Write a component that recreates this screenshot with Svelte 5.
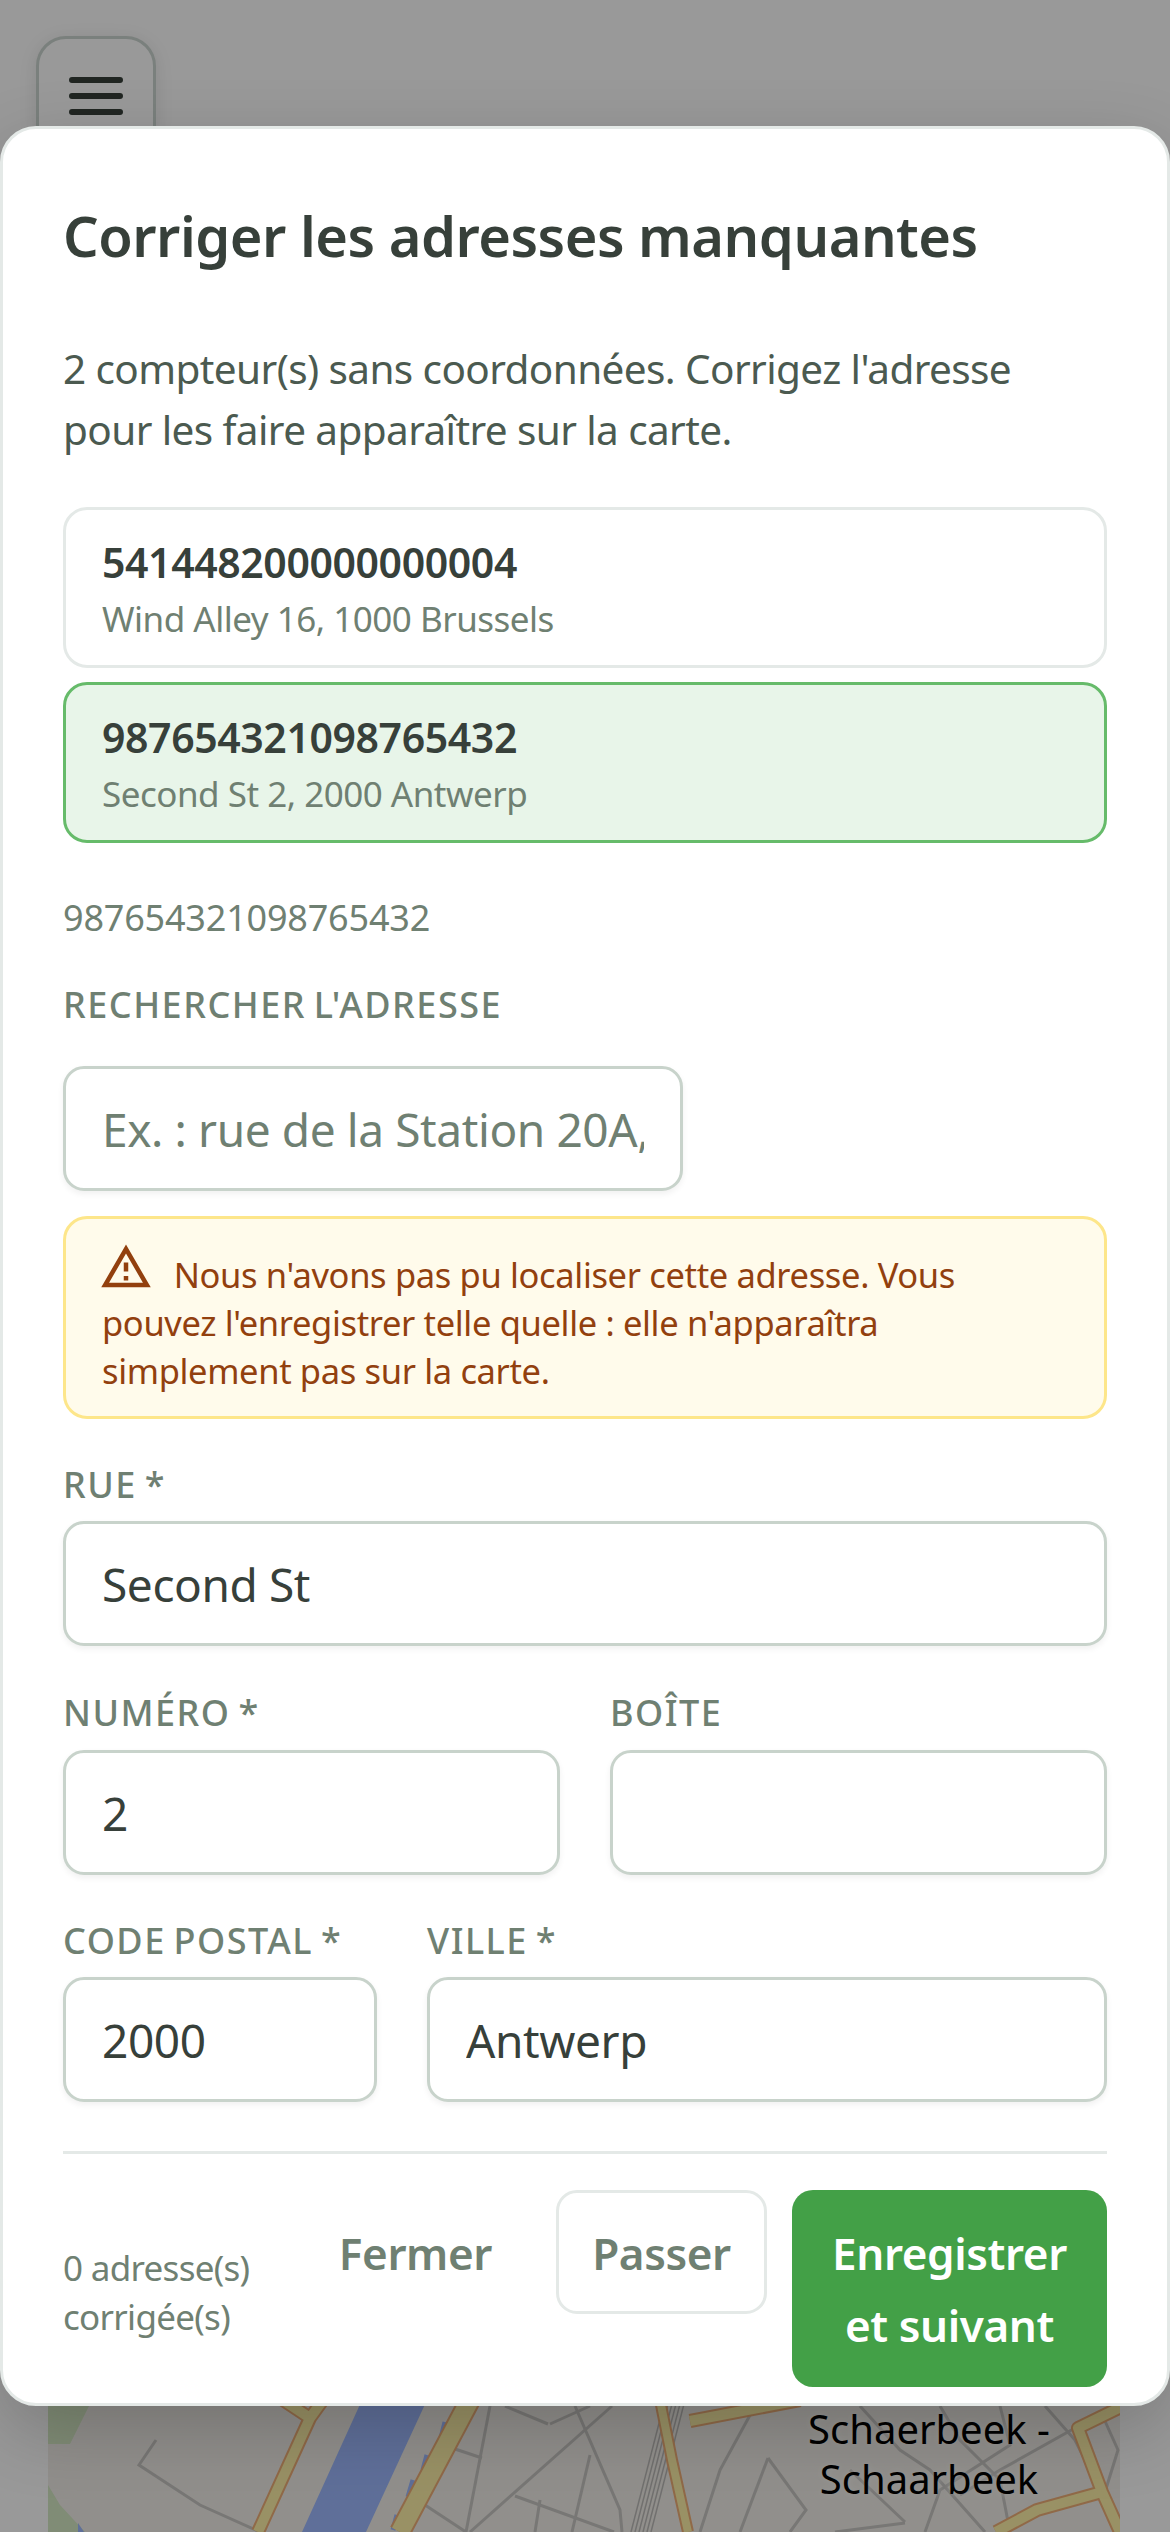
<script>
  const minor = [
    "M156 2440 L139 2465 L200 2505 L260 2532",
    "M505 2406 L548 2424",
    "M490 2406 L466 2532",
    "M455 2449 L482 2458",
    "M612 2406 L470 2532",
    "M575 2406 L620 2510 L622 2532",
    "M590 2455 L572 2532",
    "M515 2496 L614 2532",
    "M425 2505 L466 2532",
    "M540 2500 L535 2532",
    "M755 2406 L720 2470 L700 2532",
    "M860 2406 L900 2450 L930 2470 L985 2532",
    "M768 2458 L806 2510 L790 2532",
    "M768 2458 L740 2532",
    "M835 2532 L905 2523",
    "M905 2522 L850 2470",
    "M1000 2406 L1010 2445 L940 2490 L925 2532",
    "M1075 2428 L1000 2470 L960 2495",
    "M1045 2406 L1075 2440 L1100 2490",
    "M590 2406 L550 2424",
    "M940 2406 L960 2440 L1000 2480 L1010 2532",
    "M1100 2410 L1118 2450 L1105 2492"
  ];
  const rail = [0, 4, 8, 12, 16, 20];
  const roads = [
    { d: "M323 2400 L310 2418 L258 2532 M283 2400 L310 2418", w: 10 },
    { d: "M470 2400 L400 2532", w: 18 },
    { d: "M660 2400 L672 2460 L688 2532", w: 8 },
    { d: "M690 2421 L800 2400", w: 10 },
    { d: "M1125 2405 L1078 2428 L1102 2492 L1120 2532", w: 10 },
    { d: "M1102 2492 L1037 2510 L996 2532", w: 10 }
  ];
  const slivers = [
    "M445 2422 L440 2442",
    "M427 2455 L423 2470",
    "M413 2480 L408 2497",
    "M397 2515 L393 2530"
  ];
</script>

<div class="page">
  <svg class="map" viewBox="48 2400 1072 132" width="1072" height="132" aria-hidden="true">
    <rect x="48" y="2400" width="1072" height="132" class="land" />
    <path class="park" d="M48 2400 H92 L70 2444 H48 Z" />
    <path class="park" d="M48 2485 L60 2505 L85 2532 H48 Z" />
    <path class="water" d="M362 2400 H427 L366 2532 H302 Z" />
    <path class="water" d="M78 2523 L84 2532 H78 Z" />
    {#each slivers as d}
      <path class="sliver" d={d} />
    {/each}
    {#each minor as d}
      <path class="minor" d={d} />
    {/each}
    {#each rail as o}
      <path class="rail" d={`M${665 + o} 2400 L${631 + o} 2532`} />
    {/each}
    {#each roads as r}
      <path class="casing" d={r.d} style={`stroke-width:${r.w + 4}px`} />
    {/each}
    {#each roads as r}
      <path class="road" d={r.d} style={`stroke-width:${r.w}px`} />
    {/each}
  </svg>
  <div class="place">Schaerbeek -<br />Schaarbeek</div>

  <button class="menu" aria-label="Menu">
    <svg viewBox="0 0 54 38" width="54" height="38" aria-hidden="true">
      <path d="M3 3 H51 M3 19 H51 M3 35 H51" />
    </svg>
  </button>

  <div class="backdrop"></div>

  <section class="sheet">
    <h1>Corriger les adresses manquantes</h1>
    <p class="intro">2 compteur(s) sans coordonnées. Corrigez l'adresse pour les faire apparaître sur la carte.</p>

    <div class="cards">
      <div class="card">
        <div class="ean">541448200000000004</div>
        <div class="addr">Wind Alley 16, 1000 Brussels</div>
      </div>
      <div class="card active">
        <div class="ean">987654321098765432</div>
        <div class="addr">Second St 2, 2000 Antwerp</div>
      </div>
    </div>

    <div class="current">987654321098765432</div>

    <label class="lbl search-lbl" for="q">RECHERCHER L'ADRESSE</label>
    <input id="q" class="search" placeholder="Ex. : rue de la Station 20A, Bruxelles" />

    <div class="warn">
      <svg viewBox="0 0 24 24" width="54" height="54" aria-hidden="true"><path d="M12 2 L1 21 H23 M12 6 L19.53 19 H4.47 M11 10 V14 H13 V10 M11 16 V18 H13 V16" /></svg>
      <span>Nous n'avons pas pu localiser cette adresse. Vous pouvez l'enregistrer telle quelle : elle n'apparaîtra simplement pas sur la carte.</span>
    </div>

    <div class="field rue">
      <label class="lbl" for="rue">RUE *</label>
      <input id="rue" value="Second St" />
    </div>

    <div class="row two">
      <div class="field">
        <label class="lbl" for="num">NUMÉRO *</label>
        <input id="num" value="2" />
      </div>
      <div class="field">
        <label class="lbl" for="box">BOÎTE</label>
        <input id="box" />
      </div>
    </div>

    <div class="row cp">
      <div class="field">
        <label class="lbl" for="zip">CODE POSTAL *</label>
        <input id="zip" value="2000" />
      </div>
      <div class="field">
        <label class="lbl" for="city">VILLE *</label>
        <input id="city" value="Antwerp" />
      </div>
    </div>

    <footer>
      <div class="count">0 adresse(s) corrigée(s)</div>
      <div class="actions">
        <button class="btn ghost">Fermer</button>
        <button class="btn outline">Passer</button>
        <button class="btn primary">Enregistrer et suivant</button>
      </div>
    </footer>
  </section>
</div>

<style>
  :global(body) {
    margin: 0;
    background: #fff;
  }
  .page {
    position: relative;
    width: 1170px;
    height: 2532px;
    overflow: hidden;
    background: #fff;
    font-family: "Noto Sans", "Open Sans", sans-serif;
  }
  .map {
    position: absolute;
    left: 48px;
    top: 2400px;
    display: block;
  }
  .land { fill: #f2efe9; }
  .park { fill: #d5e9c5; }
  .water { fill: #9eb9ff; }
  .sliver { fill: none; stroke: #9eb9ff; stroke-width: 5; }
  .minor { fill: none; stroke: #c8c6c4; stroke-width: 3; }
  .rail { fill: none; stroke: #bdbbb9; stroke-width: 1.5; }
  .casing { fill: none; stroke: #f0b078; stroke-linejoin: round; }
  .road { fill: none; stroke: #fff2a8; stroke-linejoin: round; }
  .place {
    position: absolute;
    left: 768px;
    top: 2404px;
    width: 322px;
    text-align: center;
    font-size: 40px;
    line-height: 50px;
    color: #000;
    text-shadow: 0 0 6px #fff;
  }
  .menu {
    position: absolute;
    left: 36px;
    top: 36px;
    width: 120px;
    height: 120px;
    border: 3px solid #ccd5d0;
    border-radius: 30px;
    background: #fff;
    box-shadow: 0 3px 18px rgba(0, 0, 0, 0.1);
    padding: 0;
    display: flex;
    align-items: center;
    justify-content: center;
  }
  .menu path {
    fill: none;
    stroke: #37403a;
    stroke-width: 6;
    stroke-linecap: round;
  }
  .backdrop {
    position: absolute;
    inset: 0;
    background: rgba(0, 0, 0, 0.4);
  }
  .sheet {
    position: absolute;
    left: 0;
    right: 0;
    top: 126px;
    height: 2280px;
    box-sizing: border-box;
    padding: 67px 60px 0;
    background: #fff;
    border: 3px solid #e4e9e7;
    border-radius: 36px;
    box-shadow: 0 24px 72px rgba(0, 0, 0, 0.2);
  }
  h1 {
    margin: 0;
    font-size: 56px;
    line-height: 78px;
    font-weight: 600;
    letter-spacing: -0.5px;
    color: #37403a;
  }
  .intro {
    margin: 64px 0 47px;
    font-size: 40.5px;
    line-height: 61px;
    letter-spacing: -0.6px;
    color: #4b5a50;
  }
  .cards {
    display: flex;
    flex-direction: column;
    gap: 14px;
  }
  .card {
    box-sizing: border-box;
    height: 161px;
    padding: 24px 36px;
    border: 3px solid #e4e9e7;
    border-radius: 24px;
    background: #fff;
  }
  .card.active {
    border-color: #66bb6a;
    background: #e8f5e9;
  }
  .ean {
    font-size: 41px;
    line-height: 56px;
    font-weight: 600;
    letter-spacing: -0.4px;
    color: #37403a;
  }
  .addr {
    font-size: 35px;
    line-height: 57px;
    letter-spacing: -0.5px;
    color: #6f8072;
  }
  .current {
    margin-top: 50px;
    font-size: 36px;
    line-height: 50px;
    letter-spacing: -0.2px;
    color: #6f8072;
  }
  .lbl {
    display: block;
    font-size: 36px;
    line-height: 44px;
    font-weight: 540;
    letter-spacing: 1.5px;
    word-spacing: -3px;
    color: #6f8072;
  }
  .search-lbl {
    margin: 40px 0 39px;
  }
  input {
    display: block;
    box-sizing: border-box;
    width: 100%;
    height: 125px;
    padding: 0 36px;
    border: 3px solid #c8d3cb;
    border-radius: 21px;
    background: #fff;
    box-shadow: 0 3px 6px rgba(0, 0, 0, 0.06);
    font-family: inherit;
    font-size: 46px;
    letter-spacing: -0.4px;
    color: #37403a;
    outline: none;
  }
  input::placeholder {
    color: #6f8072;
    opacity: 1;
  }
  .search {
    width: 620px;
  }
  .warn {
    box-sizing: border-box;
    height: 203px;
    margin-top: 25px;
    padding: 21px 104px 21px 36px;
    border: 3px solid #fde68a;
    border-radius: 24px;
    background: #fffbeb;
    font-size: 34.5px;
    line-height: 48px;
    letter-spacing: -0.35px;
    color: #92400e;
  }
  .warn svg {
    fill: #92400e;
    vertical-align: -6px;
    margin-right: 12px;
    margin-left: -3px;
  }
  .rue {
    margin-top: 44px;
  }
  .rue .lbl {
    margin-bottom: 14px;
  }
  .row {
    display: grid;
    column-gap: 50px;
  }
  .two {
    margin-top: 45px;
    grid-template-columns: 1fr 1fr;
  }
  .two .lbl {
    margin-bottom: 15px;
  }
  .cp {
    margin-top: 44px;
    grid-template-columns: 314px 1fr;
  }
  .cp .lbl {
    margin-bottom: 14px;
  }
  footer {
    margin-top: 49px;
    padding-top: 36px;
    border-top: 3px solid #e4e9e7;
    display: flex;
    align-items: center;
    justify-content: space-between;
  }
  .count {
    width: 220px;
    padding-top: 6px;
    font-size: 35px;
    line-height: 49px;
    letter-spacing: -0.7px;
    color: #6f8072;
  }
  .actions {
    display: flex;
    align-items: flex-start;
    gap: 25px;
  }
  .btn {
    box-sizing: border-box;
    border-radius: 21px;
    font-family: inherit;
    font-size: 44px;
    line-height: 72px;
    font-weight: 600;
    letter-spacing: -0.4px;
    padding: 24px 0;
  }
  .ghost {
    padding: 27px 36px 24px;
    margin-right: 3px;
    border: 0;
    background: none;
    color: #6f8072;
  }
  .outline {
    width: 211px;
    height: 124px;
    border: 3px solid #e4e9e7;
    background: #fff;
    color: #6f8072;
  }
  .primary {
    width: 315px;
    height: 197px;
    padding: 24px 36px;
    border: 0;
    background: #43a047;
    color: #fff;
  }
</style>
